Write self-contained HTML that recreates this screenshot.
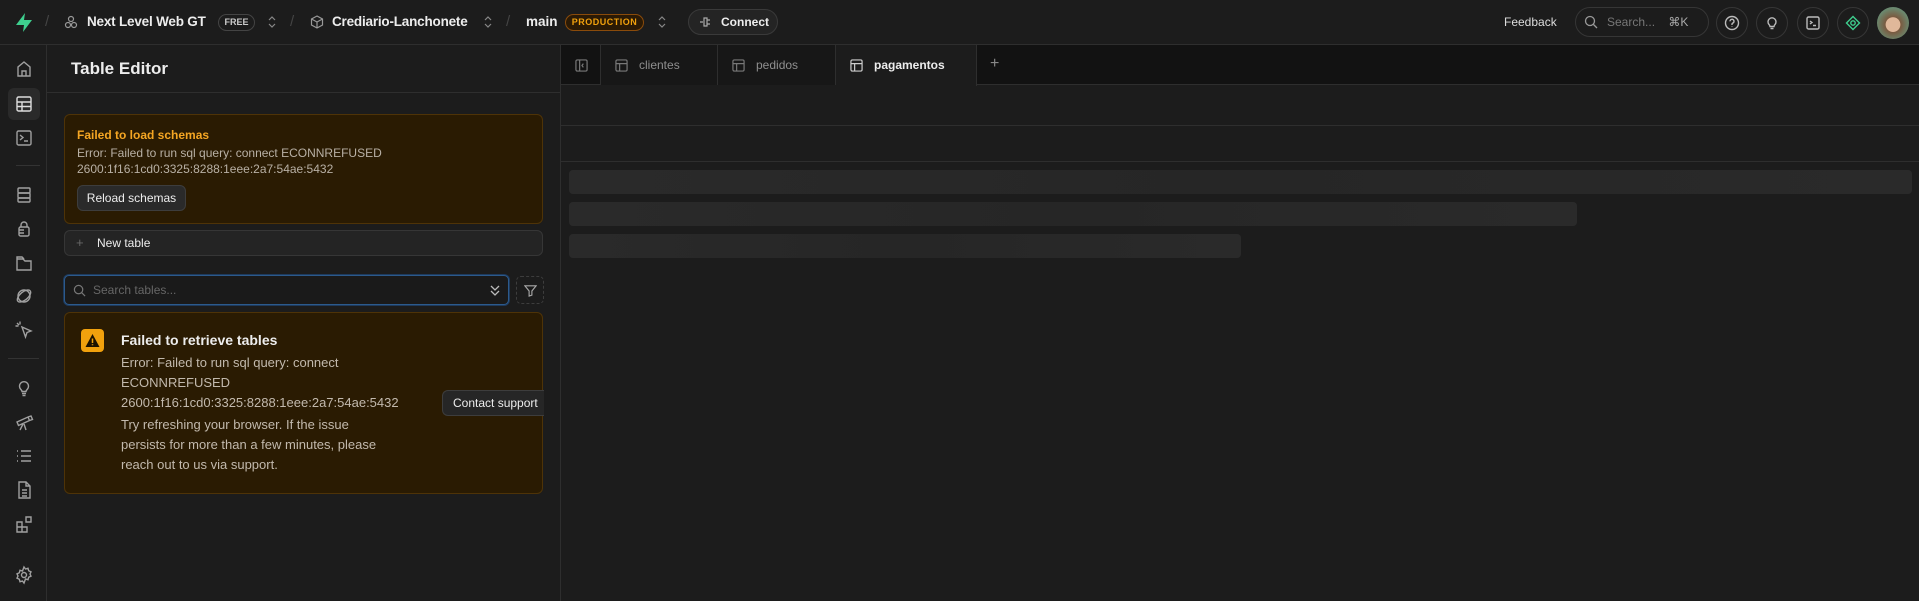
<!DOCTYPE html>
<html><head><meta charset="utf-8"><style>
*{box-sizing:border-box;margin:0;padding:0}
body{width:1919px;height:601px;background:#121212;font-family:"Liberation Sans",sans-serif;color:#ededed;position:relative;overflow:hidden;font-size:13px}
.a{position:absolute}
.top{left:0;top:0;width:1919px;height:45px;background:#1c1c1c;border-bottom:1px solid #2e2e2e}
.rail{left:0;top:45px;width:47px;height:556px;background:#1c1c1c;border-right:1px solid #2e2e2e}
.side{left:47px;top:45px;width:514px;height:556px;background:#1c1c1c;border-right:1px solid #2e2e2e}
.ic{position:absolute;left:14px;width:20px;height:20px}
.ic svg{width:20px;height:20px;stroke:#a0a0a0;fill:none;stroke-width:1.4}
.t{position:absolute;white-space:nowrap}
.circ{position:absolute;top:7px;width:32px;height:32px;border:1px solid #363636;border-radius:50%}
.circ svg{position:absolute;left:7px;top:7px;width:16px;height:16px;fill:none;stroke:#bbb;stroke-width:1.4}
.sk{position:absolute;left:569px;height:24px;background:linear-gradient(90deg,#2a2a2a,#262626 50%,#2a2a2a);border-radius:4px}
.tab{position:absolute;top:45px;height:40px;border-right:1px solid #2e2e2e;color:#8f8f8f;font-size:12px}
.tab svg{position:absolute;left:14px;top:14px;width:13px;height:13px;fill:none;stroke:#777;stroke-width:1.3}
.tab span{position:absolute;left:38px;top:13px}
.chev{position:absolute;top:15px;width:8px;height:14px}
</style></head><body>
<div class="a top"></div>
<svg class="a" style="left:14px;top:12px" width="20" height="21" viewBox="0 0 20 21"><path d="M11 1L2 13h8l-1 7 9-12h-8z" fill="#3ecf8e"/></svg>
<div class="t" style="left:45px;top:13px;color:#444;font-size:15px">/</div>
<svg class="a" style="left:64px;top:15px" width="14" height="14" viewBox="0 0 14 14" fill="none" stroke="#999" stroke-width="1.2"><circle cx="7" cy="4" r="2.5"/><circle cx="4" cy="10" r="2.5"/><circle cx="10" cy="10" r="2.5"/></svg>
<div class="t" style="left:87px;top:14px;font-size:13.5px;font-weight:bold;letter-spacing:-.2px">Next Level Web GT</div>
<div class="t" style="left:218px;top:14px;width:37px;height:17px;border:1px solid #444;border-radius:9px;font-size:9px;font-weight:bold;color:#ccc;text-align:center;line-height:15px">FREE</div>
<svg class="chev" style="left:268px" viewBox="0 0 8 14" fill="none" stroke="#888" stroke-width="1.2"><path d="M1 5l3-3 3 3M1 9l3 3 3-3"/></svg>
<div class="t" style="left:290px;top:13px;color:#444;font-size:15px">/</div>
<svg class="a" style="left:310px;top:15px" width="14" height="14" viewBox="0 0 14 14" fill="none" stroke="#999" stroke-width="1.2"><path d="M7 1l5.5 3v6L7 13 1.5 10V4zM1.5 4L7 7l5.5-3M7 7v6"/></svg>
<div class="t" style="left:332px;top:14px;font-size:13.5px;font-weight:bold;letter-spacing:-.2px">Crediario-Lanchonete</div>
<svg class="chev" style="left:484px" viewBox="0 0 8 14" fill="none" stroke="#888" stroke-width="1.2"><path d="M1 5l3-3 3 3M1 9l3 3 3-3"/></svg>
<div class="t" style="left:506px;top:13px;color:#444;font-size:15px">/</div>
<div class="t" style="left:526px;top:14px;font-size:13.5px;font-weight:bold">main</div>
<div class="t" style="left:565px;top:14px;width:79px;height:17px;border:1px solid #8a4b0b;background:#2b1a05;border-radius:9px;font-size:9px;font-weight:bold;color:#f1a10d;text-align:center;line-height:15px;letter-spacing:.5px">PRODUCTION</div>
<svg class="chev" style="left:658px" viewBox="0 0 8 14" fill="none" stroke="#888" stroke-width="1.2"><path d="M1 5l3-3 3 3M1 9l3 3 3-3"/></svg>
<div class="t" style="left:688px;top:9px;width:90px;height:26px;border:1px solid #3a3a3a;background:#242424;border-radius:13px;font-size:12px;font-weight:bold;line-height:24px;padding-left:32px">Connect</div>
<svg class="a" style="left:699px;top:16px" width="14" height="12" viewBox="0 0 14 12" fill="none" stroke="#aaa" stroke-width="1.2"><path d="M1 6h3M5 2h3v8H5zM8 4h3M8 8h3"/></svg>
<div class="t" style="left:1504px;top:15px;font-size:12px;color:#ddd">Feedback</div>
<div class="t" style="left:1575px;top:7px;width:134px;height:30px;border:1px solid #363636;border-radius:15px;font-size:12px;color:#777;line-height:28px;padding-left:31px">Search...&nbsp;&nbsp;&nbsp;&nbsp;<span style="color:#aaa">⌘K</span></div>
<svg class="a" style="left:1584px;top:15px" width="14" height="14" viewBox="0 0 14 14" fill="none" stroke="#999" stroke-width="1.3"><circle cx="6" cy="6" r="4.5"/><path d="M9.5 9.5L13 13"/></svg>
<div class="circ" style="left:1716px"><svg viewBox="0 0 16 16"><circle cx="8" cy="8" r="6.5"/><path d="M6 6.3a2 2 0 1 1 2.5 1.9c-.4.2-.5.5-.5 1V10M8 11.5v.5"/></svg></div>
<div class="circ" style="left:1756px"><svg viewBox="0 0 16 16"><path d="M5 9.5a4 4 0 1 1 6 0c-.7.7-1 1.3-1 2H6c0-.7-.3-1.3-1-2zM6.5 13.5h3"/></svg></div>
<div class="circ" style="left:1797px"><svg viewBox="0 0 16 16"><rect x="2" y="2" width="12" height="12" rx="1.5"/><path d="M5 6l2 1.5L5 9M8 10.5h3"/></svg></div>
<div class="circ" style="left:1837px"><svg viewBox="0 0 16 16" style="stroke:#3ecf8e"><path d="M8 1.5L14.5 8 8 14.5 1.5 8z"/><circle cx="8" cy="8" r="2.2"/></svg></div>
<div class="a" style="left:1877px;top:7px;width:32px;height:32px;border-radius:50%;background:radial-gradient(circle at 50% 55%,#e0b89a 0 30%,#7a5a40 32%,#6a8a70 70%,#555 100%)"></div>

<div class="a rail"></div>
<div class="a" style="left:8px;top:88px;width:32px;height:32px;background:#2a2a2a;border-radius:6px"></div>
<div class="a" style="left:16px;top:165px;width:24px;height:1px;background:#333"></div>
<div class="a" style="left:8px;top:358px;width:31px;height:1px;background:#333"></div>
<div class="ic" style="top:59px"><svg viewBox="0 0 20 20"><path d="M4 17V8l6-5 6 5v9zM8 17v-5h4v5"/></svg></div>
<div class="ic" style="top:94px"><svg viewBox="0 0 20 20" style="stroke:#ddd"><rect x="3" y="3" width="14" height="14" rx="1.5"/><path d="M3 8h14M3 12.5h14M8 8v9"/></svg></div>
<div class="ic" style="top:128px"><svg viewBox="0 0 20 20"><rect x="3" y="3" width="14" height="14" rx="1.5"/><path d="M6 7l3 2.5L6 12M10 13h4"/></svg></div>
<div class="ic" style="top:185px"><svg viewBox="0 0 20 20"><rect x="4" y="3" width="12" height="5" rx="1"/><rect x="4" y="8" width="12" height="5" rx="1"/><rect x="4" y="13" width="12" height="4" rx="1"/></svg></div>
<div class="ic" style="top:219px"><svg viewBox="0 0 20 20"><path d="M7 8V6a3 3 0 0 1 6 0v2"/><rect x="5" y="8" width="10" height="9" rx="1.5"/><path d="M5 11h5M5 14h5"/></svg></div>
<div class="ic" style="top:253px"><svg viewBox="0 0 20 20"><path d="M3 6h6l2 2h6v9H3zM3 6V4h5l2 2"/></svg></div>
<div class="ic" style="top:286px"><svg viewBox="0 0 20 20"><circle cx="10" cy="10" r="6"/><ellipse cx="10" cy="10" rx="8" ry="4" transform="rotate(-40 10 10)"/></svg></div>
<div class="ic" style="top:320px"><svg viewBox="0 0 20 20"><path d="M8 7l9 4-4 1.5L11.5 17zM3 3l2 2M6 1.5v3M1.5 6h3"/></svg></div>
<div class="ic" style="top:378px"><svg viewBox="0 0 20 20"><path d="M6.5 11a4.5 4.5 0 1 1 7 0c-.8.9-1.5 1.5-1.5 2.5H8c0-1-.7-1.6-1.5-2.5zM8 15.5h4M8.5 17.5h3"/></svg></div>
<div class="ic" style="top:412px"><svg viewBox="0 0 20 20"><path d="M3 10l11-5 1.5 3.5-11 5zM14 5l3-1 1.5 3.5-3 1M9 12l-3 6M10 12l2 6"/></svg></div>
<div class="ic" style="top:446px"><svg viewBox="0 0 20 20"><path d="M7 5h10M7 10h10M7 15h10M3 5h1M3 10h1M3 15h1"/></svg></div>
<div class="ic" style="top:480px"><svg viewBox="0 0 20 20"><path d="M5 2h7l4 4v12H5zM12 2v4h4M8 10h5M8 13h5M8 16h5"/></svg></div>
<div class="ic" style="top:514px"><svg viewBox="0 0 20 20"><path d="M3 8h5v5H3zM8 13h5v5H8zM3 13h5v5H3zM12 3h5v5h-5z"/></svg></div>
<div class="ic" style="top:565px"><svg viewBox="0 0 20 20"><circle cx="10" cy="10" r="2.5"/><path d="M10 2l1.5 2 2.5-.7.7 2.5 2.3 1-1 2.2 1 2.2-2.3 1-.7 2.5-2.5-.7L10 18l-1.5-2-2.5.7-.7-2.5-2.3-1 1-2.2-1-2.2 2.3-1 .7-2.5 2.5.7z"/></svg></div>

<div class="a side"></div>
<div class="a" style="left:47px;top:92px;width:514px;height:1px;background:#2e2e2e"></div>
<div class="t" style="left:71px;top:59px;font-size:17px;font-weight:bold">Table Editor</div>
<div class="a" style="left:64px;top:114px;width:479px;height:110px;background:#2a1b02;border:1px solid #4e3307;border-radius:6px"></div>
<div class="t" style="left:77px;top:128px;font-size:12px;font-weight:bold;color:#f5a623">Failed to load schemas</div>
<div class="t" style="left:77px;top:146px;font-size:12px;color:#b8b0a5">Error: Failed to run sql query: connect ECONNREFUSED</div>
<div class="t" style="left:77px;top:162px;font-size:12px;color:#b8b0a5">2600:1f16:1cd0:3325:8288:1eee:2a7:54ae:5432</div>
<div class="t" style="left:77px;top:185px;width:109px;height:26px;background:#2a2a2a;border:1px solid #3d3d3d;border-radius:6px;font-size:12px;line-height:24px;text-align:center">Reload schemas</div>
<div class="a" style="left:64px;top:230px;width:479px;height:26px;background:#242424;border:1px solid #363636;border-radius:6px"></div>
<div class="t" style="left:76px;top:235px;font-size:13px;color:#666">+</div>
<div class="t" style="left:97px;top:236px;font-size:12px">New table</div>
<div class="a" style="left:64px;top:275px;width:445px;height:30px;background:#1a1a1a;border:1px solid #2c5a8c;box-shadow:0 0 0 1px #1e3a5c;border-radius:5px"></div>
<svg class="a" style="left:73px;top:284px" width="13" height="13" viewBox="0 0 14 14" fill="none" stroke="#777" stroke-width="1.3"><circle cx="6" cy="6" r="4.5"/><path d="M9.5 9.5L13 13"/></svg>
<div class="t" style="left:93px;top:283px;font-size:12px;color:#666">Search tables...</div>
<svg class="a" style="left:490px;top:283px" width="10" height="14" viewBox="0 0 10 14" fill="none" stroke="#bbb" stroke-width="1.3"><path d="M1 3l4 4 4-4M1 8l4 4 4-4"/></svg>
<div class="a" style="left:516px;top:276px;width:28px;height:28px;border:1px dashed #3d3d3d;border-radius:5px"></div>
<svg class="a" style="left:524px;top:284px" width="13" height="13" viewBox="0 0 14 14" fill="none" stroke="#aaa" stroke-width="1.2"><path d="M1 2h12L8.5 7.5V12L5.5 13V7.5z"/></svg>
<div class="a" style="left:64px;top:312px;width:479px;height:182px;background:#2a1b02;border:1px solid #4e3307;border-radius:6px"></div>
<div class="a" style="left:81px;top:329px;width:23px;height:23px;background:#f1a10d;border-radius:4px"></div>
<svg class="a" style="left:84px;top:332px" width="17" height="17" viewBox="0 0 17 17"><path d="M8.5 2L15.5 15H1.5z" fill="#1c1200"/><path d="M8.5 6.5v4.5M8.5 12.3v1" stroke="#f1a10d" stroke-width="1.5"/></svg>
<div class="t" style="left:121px;top:332px;font-size:14px;font-weight:bold">Failed to retrieve tables</div>
<div class="a" style="left:121px;top:353px;font-size:13px;color:#c2b9ad;line-height:20px">Error: Failed to run sql query: connect<br>ECONNREFUSED<br>2600:1f16:1cd0:3325:8288:1eee:2a7:54ae:5432</div>
<div class="a" style="left:121px;top:415px;font-size:13px;color:#c2b9ad;line-height:20px">Try refreshing your browser. If the issue<br>persists for more than a few minutes, please<br>reach out to us via support.</div>
<div class="t" style="left:442px;top:390px;width:102px;height:26px;background:#262626;border:1px solid #3d3d3d;border-right:none;border-radius:6px 0 0 6px;font-size:12px;line-height:24px;padding-left:10px;overflow:hidden">Contact support</div>

<div class="a" style="left:561px;top:45px;width:1358px;height:40px;background:#121212;border-bottom:1px solid #2e2e2e"></div>
<div class="a" style="left:561px;top:85px;width:1358px;height:41px;background:#1c1c1c;border-bottom:1px solid #2e2e2e"></div>
<div class="a" style="left:561px;top:126px;width:1358px;height:36px;background:#1c1c1c;border-bottom:1px solid #2e2e2e"></div>
<div class="a" style="left:561px;top:162px;width:1358px;height:439px;background:#1c1c1c"></div>
<div class="tab" style="left:561px;width:40px"><svg viewBox="0 0 14 14"><rect x="1" y="1" width="12" height="12" rx="1.5"/><path d="M5 1v12M9 5L7.5 7 9 9"/></svg></div>
<div class="tab" style="left:601px;width:117px;background:#171717"><svg viewBox="0 0 14 14"><rect x="1" y="1" width="12" height="12" rx="1.5"/><path d="M1 5h12M5 5v8"/></svg><span>clientes</span></div>
<div class="tab" style="left:718px;width:118px;background:#171717"><svg viewBox="0 0 14 14"><rect x="1" y="1" width="12" height="12" rx="1.5"/><path d="M1 5h12M5 5v8"/></svg><span>pedidos</span></div>
<div class="tab" style="left:836px;width:141px;background:#1c1c1c;height:41px;color:#ededed;font-weight:bold"><svg viewBox="0 0 14 14" style="stroke:#ccc"><rect x="1" y="1" width="12" height="12" rx="1.5"/><path d="M1 5h12M5 5v8"/></svg><span>pagamentos</span></div>
<div class="t" style="left:990px;top:55px;color:#888;font-size:16px">+</div>
<div class="sk" style="top:170px;width:1343px"></div>
<div class="sk" style="top:202px;width:1008px"></div>
<div class="sk" style="top:234px;width:672px"></div>
</body></html>
